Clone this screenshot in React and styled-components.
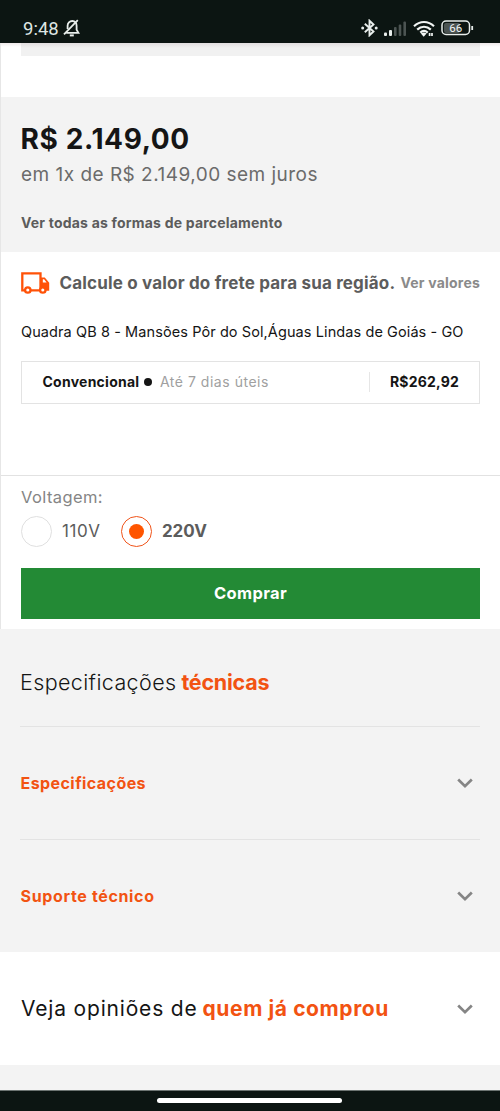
import React from "react";
import styled, { createGlobalStyle } from "styled-components";

const GlobalStyle = createGlobalStyle`
  * { box-sizing: border-box; }
  body { margin: 0; background: #f3f3f3; font-family: Inter, "Liberation Sans", sans-serif; }
`;
const Screen = styled.div`
  width: 500px;
  height: 1111px;
  display: flex;
  flex-direction: column;
  overflow: hidden;
  background: #f3f3f3;
`;
const Text = styled.span`
  display: block;
  white-space: nowrap;
  font-size: ${(p) => p.$size}px;
  font-weight: ${(p) => p.$weight || 400};
  line-height: ${(p) => p.$line || 20}px;
  letter-spacing: ${(p) => p.$track || 0}px;
  color: ${(p) => p.$color || "#151515"};
`;
const StatusBar = styled.header`
  height: 43px;
  flex: none;
  display: flex;
  justify-content: space-between;
  padding: 13px 26px 0 23px;
  background: #0c1512;
`;
const StatusGroup = styled.div`
  display: flex;
  align-items: center;
  height: 30px;
  gap: ${(p) => p.$gap}px;
`;
const Clock = styled.span`
  font: 400 18.5px/30px Roboto, sans-serif;
  padding-top: 1px;
  color: #dfe5e3;
`;
const Product = styled.main`
  flex: none;
  border-left: 1px solid #e6e6e6;
  background: #fff;
`;
const Gallery = styled.div`
  height: 54px;
  padding: 0 20px;
  background: linear-gradient(#efe9ea, #fff 4px);
`;
const GalleryEdge = styled.div`
  height: 13px;
  background: linear-gradient(#e2dedf, #f1f1f1 5px);
`;
const PriceBlock = styled.section`
  height: 155px;
  padding: 25px 20px 0;
  background: #f3f3f3;
`;
const Price = styled(Text)`
  margin-left: -0.5px;
`;
const Installments = styled(Text)`
  margin: 6px 0 26px;
`;
const Shipping = styled.section`
  height: 224px;
  padding: 20px 20px 0;
  border-bottom: 1px solid #e2e2e2;
`;
const ShippingHead = styled.div`
  display: flex;
  align-items: center;
  height: 22px;
  svg { margin-right: 9.5px; flex: none; }
`;
const ValuesLink = styled(Text)`
  margin-left: auto;
`;
const Address = styled(Text)`
  margin: 28px 0 19px;
`;
const Option = styled.div`
  display: flex;
  align-items: center;
  height: 43px;
  padding: 0 20px 1px 20.5px;
  border: 1px solid #e3e3e3;
`;
const Dot = styled.i`
  width: 8px;
  height: 8px;
  margin: 0 8px 0 4.5px;
  border-radius: 50%;
  background: #151515;
`;
const OptionPrice = styled.div`
  margin-left: auto;
  padding-left: 20px;
  border-left: 1px solid #e6e6e6;
`;
const Purchase = styled.section`
  height: 153px;
  padding: 11px 20px 0;
`;
const Radios = styled.div`
  display: flex;
  align-items: center;
  height: 31px;
  margin: 9px 0 20.5px;
`;
const Radio = styled.i`
  width: 31px;
  height: 31px;
  flex: none;
  display: grid;
  place-items: center;
  margin-right: 10px;
  border-radius: 50%;
  border: 1px solid ${(p) => (p.$on ? "#f0541a" : "#e0e0e0")};
  &::after {
    content: "";
    width: 15px;
    height: 15px;
    border-radius: 50%;
    background: ${(p) => (p.$on ? "#ff5500" : "transparent")};
  }
`;
const RadioLabel = styled(Text)`
  width: 59px;
  padding-bottom: 2px;
`;
const BuyButton = styled.button`
  display: block;
  width: 100%;
  height: 51px;
  padding: 0;
  border: 0;
  background: #238a35;
  font: 700 16.5px/51px Inter, sans-serif;
  letter-spacing: 0.35px;
  color: #fff;
`;
const Specs = styled.section`
  height: 323px;
  flex: none;
  padding: 0 20px;
`;
const Heading = styled.h2`
  display: flex;
  gap: ${(p) => p.$gap}px;
  margin: 0;
`;
const SpecsHeading = styled(Heading)`
  height: 97px;
  padding-top: 40px;
`;
const AccordionRow = styled.div`
  height: 113px;
  display: flex;
  align-items: center;
  justify-content: space-between;
  padding: 0 7px 0 0.5px;
  border-top: 1px solid #e3e3e3;
`;
const Reviews = styled.section`
  height: 113px;
  flex: none;
  display: flex;
  align-items: center;
  justify-content: space-between;
  padding: 1px 27px 0 21px;
  background: #fff;
`;
const NavBar = styled.footer`
  height: 21px;
  flex: none;
  margin-top: auto;
  display: flex;
  justify-content: center;
  padding: 7px 1px 0 0;
  border-top: 1px solid #6d7472;
  background: #0c1512;
`;
const NavPill = styled.i`
  width: 185px;
  height: 5px;
  border-radius: 3px;
  background: #fff;
`;

const BellOff = () => (
  <svg width="17" height="18" viewBox="0 0 17 18" fill="none" stroke="#e9eeec" strokeWidth="1.8">
    <path d="M3.200 13.800h12.200l-1.800-3V6.800c0-2.900-1.600-4.800-4.300-4.800S4.600 4 4.600 6.800v3.200" />
    <path d="M1 15.400 14.800 1.200" />
    <path d="M6.800 16.400h4" strokeWidth="2" />
  </svg>
);
const Bluetooth = () => (
  <svg width="17" height="18" viewBox="0 0 17 18" fill="none" stroke="#e9eeec" strokeWidth="1.900">
    <path d="M3.800 4.700 12.500 12.500 8.500 16.300V1.700L12.500 5.500 3.800 13.300" />
    <circle cx="1.700" cy="9" r="1.500" fill="#e9eeec" stroke="none" />
    <circle cx="15.200" cy="9" r="1.500" fill="#e9eeec" stroke="none" />
  </svg>
);
const Signal = () => (
  <svg width="23" height="15" viewBox="0 0 23 15">
    <rect x="0" y="11.500" width="3" height="3.500" rx="1" fill="#e9eeec" />
    <rect x="5" y="9" width="3" height="6" rx="1" fill="#e9eeec" />
    <rect x="10" y="6" width="2.600" height="9" rx="1" fill="#4c5452" />
    <rect x="14.700" y="3.500" width="2.600" height="11.500" rx="1" fill="#4c5452" />
    <rect x="19.400" y="0.500" width="2.600" height="14.500" rx="1" fill="#4c5452" />
  </svg>
);
const Wifi = () => (
  <svg width="22" height="17" viewBox="0 0 22 17" fill="none" stroke="#f2f5f4" strokeWidth="2.200">
    <path d="M1 6.200c5.800-5.600 14.200-5.600 20 0M4.200 9.600c4-3.800 9.600-3.800 13.600 0M7.300 12.600c2.200-2 5.200-2 7.400 0" />
    <path d="M7.800 13.500 10.700 16.800l2.900-3.300c-1.700-1.400-4.100-1.400-5.800 0Z" fill="#f2f5f4" stroke="none" />
    <path d="M16.600 13v3M19 13v3" strokeWidth="1.700" />
  </svg>
);
const Battery = () => (
  <svg width="33" height="16" viewBox="0 0 33 16">
    <rect x="3" y="3" width="16" height="10" rx="2" fill="#4c5452" />
    <rect x="1" y="1" width="27.500" height="13.500" rx="4" fill="none" stroke="#e9eeec" strokeWidth="1.500" />
    <path d="M31.200 6v4" stroke="#e9eeec" strokeWidth="1.800" />
    <text x="14.700" y="12" textAnchor="middle" fontFamily="Roboto, sans-serif" fontSize="11.500" fill="#f2f5f4">66</text>
  </svg>
);
const Truck = () => (
  <svg width="29" height="22" viewBox="0 0 29 22">
    <path d="M19.500 5.500h4.300l4.400 5.200v8H19.500Z" fill="#ff5208" />
    <path d="M21.800 7.300h1.300l2.500 3.200h-3.800Z" fill="#fff" />
    <path d="M1.300 1.300h18.200v17H1.300Z" fill="#fff" stroke="#ff5208" strokeWidth="2.300" />
    <circle cx="6.800" cy="18" r="2.700" fill="#fff" stroke="#ff5208" strokeWidth="2.300" />
    <circle cx="21.800" cy="18" r="2.700" fill="#fff" stroke="#ff5208" strokeWidth="2.300" />
  </svg>
);
const Chevron = () => (
  <svg width="16" height="12" viewBox="0 0 16 12" fill="none" stroke="#858585" strokeWidth="2.700">
    <path d="M1.200 2.500 8 9.100 14.800 2.500" />
  </svg>
);

const ORANGE = "#f25312";

export default function App() {
  return (
    <Screen>
      <GlobalStyle />
      <StatusBar>
        <StatusGroup $gap={4}>
          <Clock>9:48</Clock>
          <BellOff />
        </StatusGroup>
        <StatusGroup $gap={6}>
          <Bluetooth />
          <Signal />
          <Wifi />
          <Battery />
        </StatusGroup>
      </StatusBar>
      <Product>
        <Gallery><GalleryEdge /></Gallery>
        <PriceBlock>
          <Price $size={28} $weight={700} $line={35} $track={0.62}>R$ 2.149,00</Price>
          <Installments $size={19} $line={24} $track={0.48} $color="#6b6b6b">em 1x de R$ 2.149,00 sem juros</Installments>
          <Text $size={14} $weight={700} $track={0.2} $color="#5c5c5c">Ver todas as formas de parcelamento</Text>
        </PriceBlock>
        <Shipping>
          <ShippingHead>
            <Truck />
            <Text $size={17} $weight={700} $track={0.17} $color="#5c5c5c">Calcule o valor do frete para sua região.</Text>
            <ValuesLink $size={14} $weight={700} $track={0.2} $color="#8a8a8a">Ver valores</ValuesLink>
          </ShippingHead>
          <Address $size={14.5} $track={0.09}>Quadra QB 8 - Mansões Pôr do Sol,Águas Lindas de Goiás - GO</Address>
          <Option>
            <Text $size={14} $weight={700} $track={0.25}>Convencional</Text>
            <Dot />
            <Text $size={14} $track={0.53} $color="#a0a0a0">Até 7 dias úteis</Text>
            <OptionPrice>
              <Text $size={14} $weight={700} $track={0.2}>R$262,92</Text>
            </OptionPrice>
          </Option>
        </Shipping>
        <Purchase>
          <Text $size={16.5} $track={0.4} $color="#858585">Voltagem:</Text>
          <Radios>
            <Radio />
            <RadioLabel $size={17} $track={0.6} $color="#5c5c5c">110V</RadioLabel>
            <Radio $on />
            <RadioLabel $size={17} $weight={700} $track={-0.1} $color="#5c5c5c">220V</RadioLabel>
          </Radios>
          <BuyButton>Comprar</BuyButton>
        </Purchase>
      </Product>
      <Specs>
        <SpecsHeading $gap={5}>
          <Text $size={21.5} $weight={300} $line={26} $track={0.38}>Especificações</Text>
          <Text $size={21.5} $weight={700} $line={26} $track={-0.25} $color={ORANGE}>técnicas</Text>
        </SpecsHeading>
        <AccordionRow>
          <Text $size={16} $weight={700} $track={0.43} $color={ORANGE}>Especificações</Text>
          <Chevron />
        </AccordionRow>
        <AccordionRow>
          <Text $size={16} $weight={700} $track={0.65} $color={ORANGE}>Suporte técnico</Text>
          <Chevron />
        </AccordionRow>
      </Specs>
      <Reviews>
        <Heading $gap={5}>
          <Text $size={21} $line={26} $track={0.82}>Veja opiniões de</Text>
          <Text $size={21} $weight={700} $line={26} $track={0.6} $color={ORANGE}>quem já comprou</Text>
        </Heading>
        <Chevron />
      </Reviews>
      <NavBar><NavPill /></NavBar>
    </Screen>
  );
}
